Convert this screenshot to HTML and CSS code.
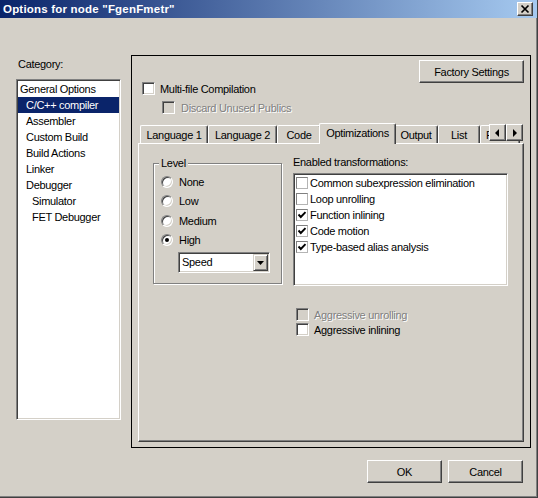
FILE: index.html
```html
<!DOCTYPE html>
<html>
<head>
<meta charset="utf-8">
<title>Options for node "FgenFmetr"</title>
<link rel="stylesheet" href="styles.css">
</head>
<body>
<div class="window">
  <div class="titlebar">
    <span class="title">Options for node "FgenFmetr"</span>
    <span class="close"><svg width="14" height="12" viewBox="0 0 14 12"><path d="M3.5 2.5 L10.5 9.5 M10.5 2.5 L3.5 9.5" stroke="#000" stroke-width="1.7" fill="none"/></svg></span>
  </div>
  <div class="main">
    <div class="left">
      <div class="cat-label">Category:</div>
      <ul class="cat-list">
        <li>General Options</li>
        <li class="l1 sel">C/C++ compiler</li>
        <li class="l1">Assembler</li>
        <li class="l1">Custom Build</li>
        <li class="l1">Build Actions</li>
        <li class="l1">Linker</li>
        <li class="l1">Debugger</li>
        <li class="l2">Simulator</li>
        <li class="l2">FET Debugger</li>
      </ul>
    </div>
    <div class="frame">
      <div class="frame-top">
        <div class="top-checks">
          <div class="chk-row"><span class="cb"></span><span class="lbl-gap5">Multi-file Compilation</span></div>
          <div class="chk-row sub"><span class="cb disabled"></span><span class="lbl-gap6 dis">Discard Unused Publics</span></div>
        </div>
        <div class="btn factory">Factory Settings</div>
      </div>
      <div class="tabs">
        <div class="tab w68">Language 1</div>
        <div class="tab w69">Language 2</div>
        <div class="tab w44">Code</div>
        <div class="tab sel">Optimizations</div>
        <div class="tab w44">Output</div>
        <div class="tab w42">List</div>
        <div class="tab w40 left-text">Preprocessor</div>
        <div class="scroll-arrows">
          <span class="arrow"><svg width="5" height="8" viewBox="0 0 5 8"><polygon points="4,0 4,8 0,4" fill="#000"/></svg></span>
          <span class="arrow"><svg width="5" height="8" viewBox="0 0 5 8"><polygon points="1,0 1,8 5,4" fill="#000"/></svg></span>
        </div>
      </div>
      <div class="pane">
        <div class="pane-row">
          <div class="group">
            <span class="legend">Level</span>
            <div class="radios">
              <div class="radio-row"><span class="radio"></span><span class="rlbl">None</span></div>
              <div class="radio-row"><span class="radio"></span><span class="rlbl">Low</span></div>
              <div class="radio-row"><span class="radio"></span><span class="rlbl">Medium</span></div>
              <div class="radio-row"><span class="radio on"></span><span class="rlbl">High</span></div>
            </div>
            <div class="combo">
              <span class="combo-text">Speed</span>
              <span class="combo-btn"><svg width="7" height="4" viewBox="0 0 7 4"><polygon points="0,0 7,0 3.5,4" fill="#000"/></svg></span>
            </div>
          </div>
          <div class="transforms">
            <div class="tr-label">Enabled transformations:</div>
            <div class="tr-list">
              <div class="tr-row"><span class="lcb"></span><span>Common subexpression elimination</span></div>
              <div class="tr-row"><span class="lcb"></span><span>Loop unrolling</span></div>
              <div class="tr-row"><span class="lcb"><svg width="10" height="10" viewBox="0 0 10 10"><polyline points="1.5,4.5 3.8,7 8.5,2.2" stroke="#000" stroke-width="1.9" fill="none"/></svg></span><span>Function inlining</span></div>
              <div class="tr-row"><span class="lcb"><svg width="10" height="10" viewBox="0 0 10 10"><polyline points="1.5,4.5 3.8,7 8.5,2.2" stroke="#000" stroke-width="1.9" fill="none"/></svg></span><span>Code motion</span></div>
              <div class="tr-row"><span class="lcb"><svg width="10" height="10" viewBox="0 0 10 10"><polyline points="1.5,4.5 3.8,7 8.5,2.2" stroke="#000" stroke-width="1.9" fill="none"/></svg></span><span>Type-based alias analysis</span></div>
            </div>
            <div class="aggr">
              <div class="aggr-row"><span class="cb disabled"></span><span class="lbl-gap5 dis">Aggressive unrolling</span></div>
              <div class="aggr-row"><span class="cb"></span><span class="lbl-gap5">Aggressive inlining</span></div>
            </div>
          </div>
        </div>
      </div>
    </div>
  </div>
  <div class="footer">
    <div class="btn dlg">OK</div>
    <div class="btn dlg">Cancel</div>
  </div>
</div>
</body>
</html>
```
FILE: styles.css
```css
* {
  box-sizing: border-box;
  margin: 0;
  padding: 0;
}

body {
  margin: 0;
  width: 538px;
  height: 498px;
  overflow: hidden;
  background: #D4D0C8;
  font-family: "Liberation Sans", Arial, sans-serif;
  font-size: 11px;
  letter-spacing: -0.3px;
  color: #000;
}

.window {
  width: 538px;
  height: 498px;
  display: flex;
  flex-direction: column;
  border-right: 1px solid #404040;
  border-bottom: 1px solid #404040;
  box-shadow: inset -1px -1px 0 #808080;
}

/* title bar */
.titlebar {
  height: 18px;
  flex: none;
  display: flex;
  align-items: center;
  padding: 0 4px 0 3px;
  background: linear-gradient(to right, #0A246A, #A6CAF0);
}

.title {
  color: #fff;
  font-weight: bold;
  font-size: 11.5px;
  letter-spacing: 0.2px;
  white-space: nowrap;
}

.close {
  margin-left: auto;
  width: 16px;
  height: 14px;
  display: flex;
  align-items: center;
  justify-content: center;
  background: #D4D0C8;
  border: 1px solid;
  border-color: #fff #404040 #404040 #fff;
  box-shadow: inset -1px -1px 0 #808080;
}

/* main */
.main {
  display: flex;
  padding-left: 16px;
  height: 430px;
  flex: none;
}

.left {
  width: 105px;
  padding-top: 40px;
  margin-right: 10px;
}

.cat-label {
  height: 13px;
  line-height: 13px;
  margin-bottom: 8px;
  padding-left: 2px;
}

.cat-list {
  list-style: none;
  width: 105px;
  height: 341px;
  background: #fff;
  border: 1px solid;
  border-color: #808080 #fff #fff #808080;
  box-shadow: inset 1px 1px 0 #404040, inset -1px -1px 0 #D4D0C8;
  padding: 1px;
}

.cat-list li {
  height: 16px;
  line-height: 16px;
  padding-left: 2px;
  white-space: nowrap;
}

.cat-list li.l1 { padding-left: 8px; }
.cat-list li.l2 { padding-left: 14px; }

.cat-list li.sel {
  background: #0A246A;
  color: #fff;
}

/* frame */
.frame {
  margin-top: 37px;
  width: 400px;
  height: 393px;
  border: 1px solid #000;
  display: flex;
  flex-direction: column;
  padding: 0 6px 5px 6px;
}

.frame-top {
  height: 67px;
  flex: none;
  display: flex;
  align-items: flex-start;
}

.top-checks {
  padding-top: 25px;
  margin-left: 4px;
}

.chk-row {
  display: flex;
  align-items: center;
  height: 15px;
  white-space: nowrap;
}

.chk-row.sub {
  margin-top: 4px;
  margin-left: 20px;
}

.lbl-gap5 { margin-left: 5px; }
.lbl-gap6 { margin-left: 6px; }

.dis {
  color: #808080;
  text-shadow: 1px 1px 0 #fff;
}

.cb {
  width: 13px;
  height: 13px;
  flex: none;
  background: #fff;
  border: 1px solid;
  border-color: #808080 #fff #fff #808080;
  box-shadow: inset 1px 1px 0 #404040, inset -1px -1px 0 #D4D0C8;
}

.cb.disabled {
  background: #D4D0C8;
}

.btn {
  display: flex;
  align-items: center;
  justify-content: center;
  background: #D4D0C8;
  border: 1px solid;
  border-color: #fff #404040 #404040 #fff;
  box-shadow: inset -1px -1px 0 #808080;
  white-space: nowrap;
}

.factory {
  margin-left: auto;
  margin-top: 4px;
  width: 105px;
  height: 23px;
}

/* tabs */
.tabs {
  position: relative;
  z-index: 1;
  height: 21px;
  flex: none;
  display: flex;
  align-items: flex-end;
  padding-left: 2px;
}

.tab {
  height: 18px;
  margin-bottom: 1px;
  padding-top: 1px;
  line-height: 16px;
  text-align: center;
  white-space: nowrap;
  overflow: hidden;
  background: #D4D0C8;
  border-top: 1px solid #fff;
  border-left: 1px solid #fff;
  border-right: 1px solid #404040;
  box-shadow: inset -1px 0 0 #808080;
  border-radius: 2px 2px 0 0;
  flex: none;
}

.w68 { width: 68px; }
.w69 { width: 69px; }
.w44 { width: 44px; }
.w42 { width: 42px; }
.w40 { width: 40px; }

.tab.left-text {
  text-align: left;
  padding-left: 5px;
}

.tab.sel {
  width: 77px;
  height: 21px;
  margin: 0 -2px;
  padding-top: 0;
  line-height: 18px;
  position: relative;
  z-index: 2;
}

.scroll-arrows {
  position: absolute;
  right: 1px;
  top: 1px;
  display: flex;
  z-index: 3;
}

.arrow {
  width: 17px;
  height: 17px;
  display: flex;
  align-items: center;
  justify-content: center;
  background: #D4D0C8;
  border: 1px solid;
  border-color: #fff #404040 #404040 #fff;
  box-shadow: inset -1px -1px 0 #808080;
}

/* pane */
.pane {
  margin-top: -1px;
  height: 299px;
  flex: none;
  border-top: 1px solid #fff;
  border-left: 1px solid #fff;
  border-right: 1px solid #404040;
  border-bottom: 1px solid #404040;
  box-shadow: inset -1px -1px 0 #808080;
}

.pane-row {
  display: flex;
  align-items: flex-start;
  padding-top: 19px;
  padding-left: 14px;
}

.group {
  position: relative;
  width: 129px;
  height: 121px;
  border: 1px solid #808080;
  box-shadow: 1px 1px 0 #fff, inset 1px 1px 0 #fff;
  flex: none;
}

.legend {
  position: absolute;
  top: -7px;
  left: 5px;
  padding: 0 2px;
  line-height: 13px;
  background: #D4D0C8;
}

.radios {
  padding-top: 8px;
  padding-left: 7px;
}

.radio-row {
  display: flex;
  align-items: center;
  height: 19.5px;
}

.radio {
  width: 12px;
  height: 12px;
  flex: none;
  border-radius: 50%;
  background: #fff;
  border: 1px solid;
  border-color: #808080 #fff #fff #808080;
  box-shadow: inset 1px 1px 0 #404040, inset -1px -1px 0 #D4D0C8;
  display: flex;
  align-items: center;
  justify-content: center;
}

.radio.on::after {
  content: "";
  width: 4px;
  height: 4px;
  border-radius: 50%;
  background: #000;
}

.rlbl {
  margin-left: 6px;
}

.combo {
  margin-top: 2px;
  margin-left: 24px;
  width: 92px;
  height: 21px;
  display: flex;
  align-items: stretch;
  background: #fff;
  border: 1px solid;
  border-color: #808080 #fff #fff #808080;
  box-shadow: inset 1px 1px 0 #404040, inset -1px -1px 0 #D4D0C8;
  padding: 1px;
}

.combo-text {
  flex: 1;
  line-height: 17px;
  padding-left: 2px;
}

.combo-btn {
  width: 15px;
  display: flex;
  align-items: center;
  justify-content: center;
  background: #D4D0C8;
  border: 1px solid;
  border-color: #D4D0C8 #404040 #404040 #D4D0C8;
  box-shadow: inset 1px 1px 0 #fff, inset -1px -1px 0 #808080;
}

/* transformations */
.transforms {
  margin-left: 11px;
}

.tr-label {
  margin-top: -7px;
  line-height: 13px;
  height: 13px;
  margin-bottom: 4px;
}

.tr-list {
  width: 215px;
  height: 113px;
  background: #fff;
  border: 1px solid;
  border-color: #808080 #fff #fff #808080;
  box-shadow: inset 1px 1px 0 #404040, inset -1px -1px 0 #D4D0C8;
  padding: 1px;
}

.tr-row {
  height: 16px;
  display: flex;
  align-items: center;
  padding-left: 1px;
  white-space: nowrap;
}

.lcb {
  width: 12px;
  height: 12px;
  flex: none;
  margin-right: 2px;
  background: #fff;
  border: 1px solid;
  border-color: #808080 #b4b4b4 #b4b4b4 #808080;
  display: flex;
  align-items: center;
  justify-content: center;
}

.aggr {
  margin-top: 21px;
  padding-left: 3px;
}

.aggr-row {
  display: flex;
  align-items: center;
  height: 15px;
  white-space: nowrap;
}

/* footer */
.footer {
  display: flex;
  justify-content: flex-end;
  gap: 6px;
  padding-top: 12px;
  padding-right: 14px;
}

.dlg {
  width: 75px;
  height: 23px;
}
```
